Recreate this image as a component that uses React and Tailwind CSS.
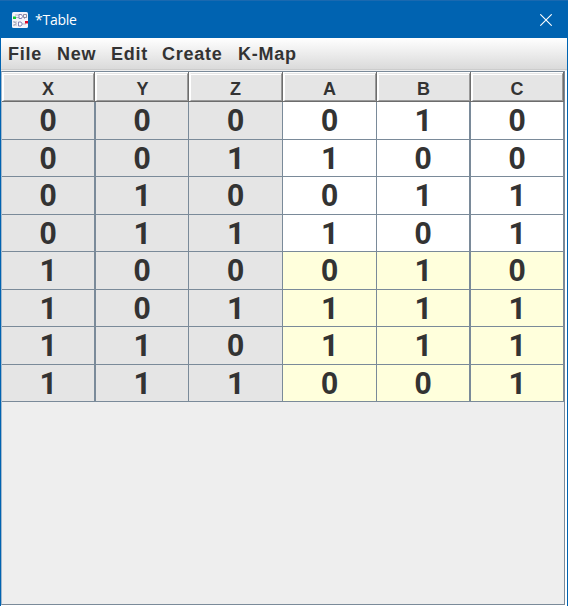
const COLUMNS = [
  { name: 'X', head: 'w-[93px]', nudge: 'mr-px', w: 'w-[94px]', edge: 'border-r-2' },
  { name: 'Y', head: 'w-[94px]', nudge: 'ml-px', w: 'w-[93px]', edge: 'border-r' },
  { name: 'Z', head: 'w-[94px]', nudge: 'mr-px', w: 'w-[94px]', edge: 'border-r' },
  { name: 'A', head: 'w-[94px]', nudge: 'mr-px', w: 'w-[94px]', edge: 'border-r' },
  { name: 'B', head: 'w-[94px]', nudge: 'mr-px', w: 'w-[94px]', edge: 'border-r-2' },
  { name: 'C', head: 'w-[93px]', nudge: 'mr-px', w: 'w-[93px]', edge: 'border-r' },
];

const ROWS = ['000010', '001100', '010011', '011101', '100010', '101111', '110111', '111001'];
const MENUS = [
  { label: 'File', w: 'w-[49px]' },
  { label: 'New', w: 'w-[54px]' },
  { label: 'Edit', w: 'w-[51px]' },
  { label: 'Create', w: 'w-[76px]' },
  { label: 'K-Map', w: 'w-[70px]' },
];

function AppIcon() {
  return (
    <svg width="16" height="16" viewBox="0 0 16 16" fill="none">
      <rect width="16" height="16" rx="1.5" fill="#f4f4fa" />
      <path d="M3 3h4M4 5.5h3M1 10h4M1 13h4M10 12h4M12.5 5v2" stroke="#b5b5c8" />
      <path d="M7 2.5h2.5q2 2 0 4H7zM6.5 10H9q2.5 2 0 4H6.5z" fill="#fff" stroke="#7774ad" strokeWidth=".9" />
      <path d="M11.5 2.5h3v3h-3zM2 9.5l2 2-2 2" stroke="#77778c" strokeWidth=".8" />
      <rect x="1" y="4.5" width="3" height="2.5" fill="#12cc31" />
      <rect x="13" y="9" width="3" height="2.5" fill="#e20d2c" />
    </svg>
  );
}

function HeaderCell({ column }) {
  return (
    <div className={`${column.head} h-[30px] shrink-0 border-r border-b border-[#6d6d6d] bg-white pt-px pl-px`}>
      <div className="flex h-full items-center justify-center border-t border-r border-b border-l border-t-[#e5e5e5] border-r-[#999] border-b-[#999] border-l-white bg-[#e5e5e5] pt-[3px] text-[18px] leading-none font-bold shadow-[inset_0_1px_0_#fff]">
        <span className={column.nudge}>{column.name}</span>
      </div>
    </div>
  );
}

export default function App() {
  return (
    <div className="flex h-[606px] w-[569px] flex-col overflow-hidden bg-white font-['Liberation_Sans',sans-serif] text-[#333]">
      <header className="flex h-[38px] w-[568px] shrink-0 items-center border-t border-[#1a69b0] bg-[#0063b1] pl-3 text-white">
        <AppIcon />
        <span className="ml-[7px] font-['Open_Sans',sans-serif] text-[14px] tracking-[-0.25px]">*Table</span>
        <svg className="mr-[16px] ml-auto" width="12" height="12" viewBox="0 0 12 12" stroke="white" strokeWidth="1.1">
          <path d="M.3.3l11.4 11.4M11.7.3L.3 11.7" />
        </svg>
      </header>
      <div className="flex min-h-0 w-[568px] flex-1 border-r border-l border-[#0063b1]">
        <main className="flex w-[566px] flex-col">
          <nav className="flex h-[31px] shrink-0 items-center bg-linear-to-b from-white to-[#dadada] pl-[7px] text-[18px] leading-none font-bold tracking-[0.75px]">
            {MENUS.map((menu) => <span key={menu.label} className={`${menu.w} shrink-0`}>{menu.label}</span>)}
          </nav>
          <div className="h-[2px] shrink-0 border-t border-[#ccc] bg-[#eee]" />
          <section className="mb-px h-[534px] w-[564px] border border-[#7a8a99] border-l-[#a3b8cc] bg-[#eee]">
            <div className="flex">
              {COLUMNS.map((column) => <HeaderCell key={column.name} column={column} />)}
            </div>
            {ROWS.map((row, r) => (
              <div key={row} className={`flex ${r % 2 ? 'h-[37px]' : 'h-[38px]'}`}>
                {[...row].map((value, c) => (
                  <div
                    key={c}
                    className={`${COLUMNS[c].w} ${COLUMNS[c].edge} flex shrink-0 items-center justify-center border-b border-[#7a8a99] text-[31px] leading-none font-bold ${value === '1' ? "pl-px font-['Roboto',sans-serif]" : ''} ${c < 3 ? 'bg-[#e5e5e5]' : r < 4 ? 'bg-white' : 'bg-[#ffffdc]'}`}
                  >
                    {value}
                  </div>
                ))}
              </div>
            ))}
          </section>
        </main>
      </div>
    </div>
  );
}
